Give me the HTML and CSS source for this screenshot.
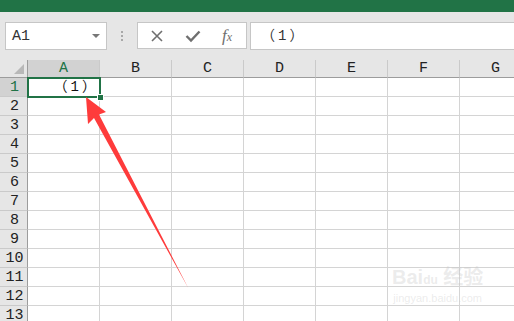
FILE: index.html
```html
<!DOCTYPE html>
<html>
<head>
<meta charset="utf-8">
<link rel="stylesheet" href="styles.css">
</head>
<body>
<div class="app">
  <div class="ribbon"></div>
  <div class="toolbar">
    <div class="namebox"><span class="ref">A1</span><span class="caret"></span></div>
    <div class="grip"><i></i><i></i><i></i></div>
    <div class="fbtns">
      <svg class="ic" width="14" height="14" viewBox="0 0 14 14"><path d="M2 2L12 12M12 2L2 12" stroke="#6f6f6f" stroke-width="1.6" fill="none"/></svg>
      <svg class="ic" width="16" height="14" viewBox="0 0 16 14"><path d="M1.5 7L6 11.5L14.5 2.5" stroke="#6f6f6f" stroke-width="2.4" fill="none"/></svg>
      <span class="fx"><i>f</i><small>x</small></span>
    </div>
    <div class="finput">（1）</div>
  </div>
  <div class="sheet">
    <div class="corner"><span class="tri"></span></div>
    <div class="ch sel">A</div><div class="ch">B</div><div class="ch">C</div><div class="ch">D</div><div class="ch">E</div><div class="ch">F</div><div class="ch">G</div>
    <div class="rh sel">1</div><div class="c active">（1）<span class="handle"></span></div><div class="c"></div><div class="c"></div><div class="c"></div><div class="c"></div><div class="c"></div><div class="c"></div>
    <div class="rh">2</div><div class="c"></div><div class="c"></div><div class="c"></div><div class="c"></div><div class="c"></div><div class="c"></div><div class="c"></div>
    <div class="rh">3</div><div class="c"></div><div class="c"></div><div class="c"></div><div class="c"></div><div class="c"></div><div class="c"></div><div class="c"></div>
    <div class="rh">4</div><div class="c"></div><div class="c"></div><div class="c"></div><div class="c"></div><div class="c"></div><div class="c"></div><div class="c"></div>
    <div class="rh">5</div><div class="c"></div><div class="c"></div><div class="c"></div><div class="c"></div><div class="c"></div><div class="c"></div><div class="c"></div>
    <div class="rh">6</div><div class="c"></div><div class="c"></div><div class="c"></div><div class="c"></div><div class="c"></div><div class="c"></div><div class="c"></div>
    <div class="rh">7</div><div class="c"></div><div class="c"></div><div class="c"></div><div class="c"></div><div class="c"></div><div class="c"></div><div class="c"></div>
    <div class="rh">8</div><div class="c"></div><div class="c"></div><div class="c"></div><div class="c"></div><div class="c"></div><div class="c"></div><div class="c"></div>
    <div class="rh">9</div><div class="c"></div><div class="c"></div><div class="c"></div><div class="c"></div><div class="c"></div><div class="c"></div><div class="c"></div>
    <div class="rh">10</div><div class="c"></div><div class="c"></div><div class="c"></div><div class="c"></div><div class="c"></div><div class="c"></div><div class="c"></div>
    <div class="rh">11</div><div class="c"></div><div class="c"></div><div class="c"></div><div class="c"></div><div class="c"></div><div class="c"></div><div class="c"></div>
    <div class="rh">12</div><div class="c"></div><div class="c"></div><div class="c"></div><div class="c"></div><div class="c"></div><div class="c"></div><div class="c"></div>
    <div class="rh">13</div><div class="c"></div><div class="c"></div><div class="c"></div><div class="c"></div><div class="c"></div><div class="c"></div><div class="c"></div>
  </div>
  <svg class="arrow" width="514" height="321" viewBox="0 0 514 321">
    <path d="M86 97L106 112L99 114.5L188.5 288.5L94 118L88 124Z" fill="#fe3b3b"/>
  </svg>
  <div class="watermark">
    <div class="wm-logo">Bai<span class="paw">du</span> 经验</div>
    <div class="wm-url">jingyan.baidu.com</div>
  </div>
</div>
</body>
</html>
```
FILE: styles.css
```css
html, body {
  margin: 0;
  padding: 0;
  background: #ffffff;
}
.app {
  position: relative;
  width: 514px;
  height: 321px;
  overflow: hidden;
  font-family: "Liberation Mono", "Noto Sans CJK SC", monospace;
}
.ribbon {
  height: 12px;
  background: #217346;
}
.toolbar {
  height: 48px;
  background: #e6e6e6;
  box-sizing: border-box;
  padding-top: 10px;
  padding-left: 5px;
  display: flex;
  align-items: flex-start;
}
.namebox {
  width: 102px;
  height: 28px;
  box-sizing: border-box;
  border: 1px solid #c6c6c6;
  background: #ffffff;
  display: flex;
  align-items: center;
  justify-content: space-between;
  padding: 0 6px 0 6px;
}
.ref {
  font-size: 15px;
  color: #333333;
}
.caret {
  width: 0;
  height: 0;
  border-left: 4px solid transparent;
  border-right: 4px solid transparent;
  border-top: 4px solid #777777;
}
.grip {
  width: 30px;
  height: 28px;
  display: flex;
  flex-direction: column;
  align-items: center;
  justify-content: center;
  gap: 2px;
}
.grip i {
  width: 2px;
  height: 2px;
  background: #a8a8a8;
}
.fbtns {
  width: 110px;
  height: 27px;
  box-sizing: border-box;
  border: 1px solid #c6c6c6;
  background: #ffffff;
  display: flex;
  align-items: center;
  justify-content: flex-start;
  gap: 21px;
  padding-left: 12px;
}
.fx {
  font-family: "Liberation Serif", serif;
  color: #6f6f6f;
  font-size: 17px;
  font-style: italic;
}
.fx small {
  font-size: 12px;
}
.finput {
  flex: 1;
  margin-left: 3px;
  height: 28px;
  box-sizing: border-box;
  border: 1px solid #c6c6c6;
  border-right: none;
  background: #ffffff;
  font-size: 14px;
  color: #333333;
  line-height: 26px;
  padding-left: 10px;
  letter-spacing: 3px;
}
.sheet {
  display: grid;
  grid-template-columns: 28px repeat(7, 72px);
  grid-template-rows: 18px repeat(13, 19px);
}
.corner {
  background: #e6e6e6;
  border-right: 1px solid #9c9c9c;
  border-bottom: 1px solid #9c9c9c;
  box-sizing: border-box;
  display: flex;
  align-items: flex-end;
  justify-content: flex-end;
  padding: 0 3px 3px 0;
}
.tri {
  width: 0;
  height: 0;
  border-left: 10px solid transparent;
  border-bottom: 10px solid #b8b8b8;
}
.ch {
  background: #e6e6e6;
  border-right: 1px solid #cacaca;
  border-bottom: 1px solid #9c9c9c;
  box-sizing: border-box;
  text-align: center;
  font-size: 15px;
  line-height: 18px;
  color: #222222;
}
.ch.sel {
  background: #d2d2d2;
  color: #217346;
}
.rh {
  background: #e6e6e6;
  border-right: 1px solid #9c9c9c;
  border-bottom: 1px solid #cacaca;
  box-sizing: border-box;
  text-align: center;
  font-size: 15px;
  line-height: 19px;
  color: #222222;
  padding-left: 2px;
}
.rh.sel {
  background: #d2d2d2;
  color: #217346;
}
.c {
  border-right: 1px solid #d4d4d4;
  border-bottom: 1px solid #d4d4d4;
  box-sizing: border-box;
  background: #ffffff;
}
.c.active {
  position: relative;
  font-size: 14px;
  line-height: 18px;
  text-align: right;
  color: #111111;
  letter-spacing: 3px;
  padding-right: 0;
}
.c.active::after {
  content: "";
  position: absolute;
  left: -1px;
  top: -1px;
  right: -2px;
  bottom: -2px;
  border: 2px solid #217346;
}
.handle {
  position: absolute;
  right: -5px;
  bottom: -5px;
  width: 5px;
  height: 5px;
  background: #217346;
  border: 1px solid #ffffff;
  z-index: 2;
}
.arrow {
  position: absolute;
  left: 0;
  top: 0;
  pointer-events: none;
}
.watermark {
  position: absolute;
  left: 392px;
  top: 266px;
  color: rgba(200, 200, 200, 0.35);
  font-family: "Liberation Sans", "Noto Sans CJK SC", sans-serif;
  text-align: center;
}
.wm-logo {
  font-size: 20px;
  font-weight: bold;
  line-height: 22px;
}
.paw {
  font-size: 12px;
}
.wm-url {
  font-size: 11px;
  line-height: 14px;
}
```
